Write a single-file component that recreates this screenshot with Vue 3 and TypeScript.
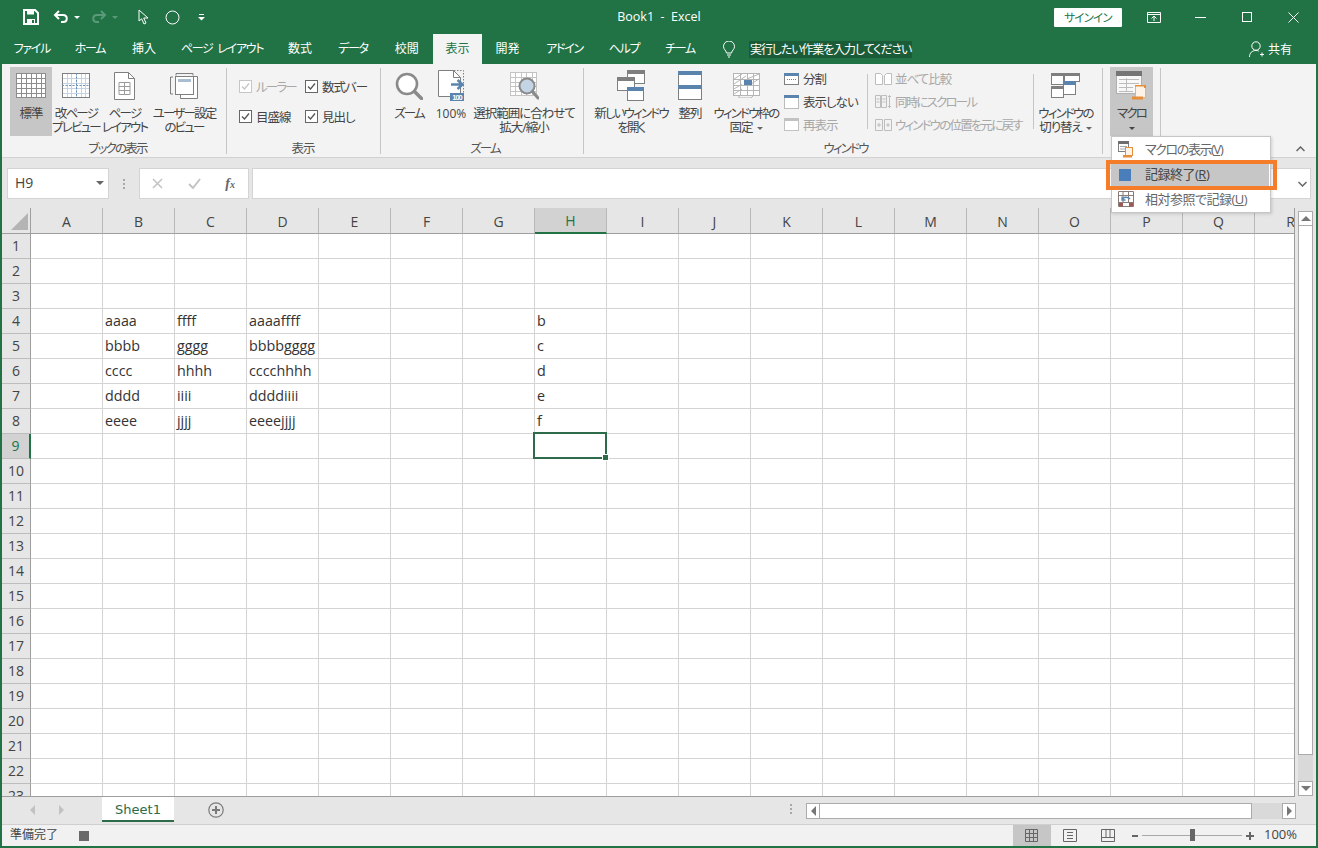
<script setup lang="ts">
type Btn = { icon: string; lines: string[]; w: number; on?: boolean; caret?: boolean }
type Icon = { w: number; h: number; svg: string }

const grey = '#7f7f7f'
const blue = '#5a84ae'

// the original UI font has narrow kana, so kana-heavy labels get tighter tracking
function tight(s: string) {
  return (s.match(/[ぁ-ヿ]/g)?.length ?? 0) / s.length > 0.5
}

function gridLines(x: number, y: number, w: number, h: number, cols: number, rows: number, color: string) {
  let s = `<rect x="${x + 0.5}" y="${y + 0.5}" width="${w - 1}" height="${h - 1}" fill="#fff" stroke="${color}"/>`
  for (let i = 1; i < cols; i++) {
    const px = x + Math.round((w * i) / cols) + 0.5
    s += `<path d="M${px} ${y}V${y + h}" stroke="${color}"/>`
  }
  for (let i = 1; i < rows; i++) {
    const py = y + Math.round((h * i) / rows) + 0.5
    s += `<path d="M${x} ${py}H${x + w}" stroke="${color}"/>`
  }
  return s
}

const icons: Record<string, Icon> = {
  normal: { w: 30, h: 25, svg: gridLines(0, 0, 30, 25, 6, 5, '#8c8c8c') },
  pagebreak: {
    w: 28,
    h: 25,
    svg:
      gridLines(0, 0, 28, 25, 6, 5, '#c5d3e2') +
      `<rect x=".5" y=".5" width="27" height="24" fill="none" stroke="${grey}"/><path d="M14.5 0v25M0 12.5h28" stroke="#6d8fb3" stroke-dasharray="2 1.5" fill="none"/>`,
  },
  pagelayout: {
    w: 21,
    h: 28,
    svg:
      `<path d="M.5.5h14l6 6v21H.5z" fill="#fff" stroke="${grey}"/><path d="M14.5.5v6h6" fill="none" stroke="${grey}"/>` +
      `<path d="M5 10.5h11M5 14.5h11M5 18.5h11M5 22.5h11M5 10.5v12M10.5 10.5v12M16 10.5v12" stroke="#9a9a9a" fill="none"/>`,
  },
  custom: {
    w: 28,
    h: 26,
    svg:
      `<path d="M10.5 3.5h17v22h-17z" fill="#fff" stroke="${grey}"/><rect x="5.500" y="3.500" width="18" height="18" fill="#fff" stroke="${grey}"/><rect x="8" y="6" width="13" height="3" fill="#a9bdd1"/>` +
      `<path d="M.5 4v17M3 4H.5M3 21H.5M6 .5h17M6 .5v2M23 .5v2" stroke="${grey}" fill="none"/>`,
  },
  zoom: {
    w: 28,
    h: 28,
    svg: `<circle cx="12" cy="12" r="10" fill="#fff" stroke="#8a8a8a" stroke-width="2.6"/><path d="M19.5 19.5l7 7" stroke="#8a8a8a" stroke-width="3.6" stroke-linecap="round"/>`,
  },
  hundred: {
    w: 27,
    h: 31,
    svg:
      `<path d="M.5.5h15l7 7v19H.5z" fill="#fff" stroke="${grey}"/><path d="M15.5.5v7h7" fill="none" stroke="${grey}"/><path d="M16 .5h9.500v22" fill="none" stroke="${grey}" stroke-dasharray="1.500 1.500"/>` +
      `<path d="M13 14.500h11M19.500 10l5 4.500-5 4.500" fill="none" stroke="${blue}" stroke-width="2.400"/>` +
      `<rect x="12" y="23" width="14" height="8" fill="${blue}"/><text x="19" y="30" text-anchor="middle" font-size="7.500" font-weight="700" fill="#fff" font-family="Liberation Sans, sans-serif">100</text>`,
  },
  fit: {
    w: 29,
    h: 28,
    svg:
      gridLines(0, 0, 27, 24, 5, 5, '#c4c4c4') +
      `<circle cx="17" cy="14" r="7.500" fill="#c3d4e5" stroke="#8a8a8a" stroke-width="2"/><path d="M22.500 19.500l5.500 6.500" stroke="#8a8a8a" stroke-width="3" stroke-linecap="round"/>`,
  },
  newwin: {
    w: 28,
    h: 31,
    svg:
      `<rect x="10.500" y=".5" width="17" height="13" fill="#fff" stroke="${grey}"/><rect x="10" y="0" width="18" height="4" fill="${grey}"/>` +
      `<rect x=".5" y="7.500" width="17" height="13" fill="#fff" stroke="${grey}"/><rect x="0" y="7" width="18" height="4" fill="${grey}"/>` +
      `<rect x="10.500" y="17.500" width="16" height="13" fill="#fff" stroke="${grey}"/><rect x="10" y="17" width="17" height="4" fill="${blue}"/>`,
  },
  arrange: {
    w: 24,
    h: 29,
    svg: `<rect x=".5" y=".5" width="23" height="28" fill="#fff" stroke="${grey}"/><rect x="0" y="0" width="24" height="4" fill="${blue}"/><rect x="0" y="14" width="24" height="4" fill="${blue}"/>`,
  },
  freeze: {
    w: 27,
    h: 25,
    svg:
      gridLines(0, 0, 27, 23, 4, 4, '#b5b5b5') +
      `<path d="M1 6l8-5M1 11l12-8M1 16l8-5M1 21l8-5M14 6l12-5M18 11l8-5" stroke="#b5b5b5" fill="none"/><rect x="11" y="7" width="8" height="5" fill="${blue}"/><path d="M6 23v2h12l2-2" fill="none" stroke="#b5b5b5"/>`,
  },
  switchwin: {
    w: 29,
    h: 25,
    svg:
      `<rect x=".5" y=".5" width="12" height="11" fill="#fff" stroke="${grey}"/><rect width="13" height="3" fill="${grey}"/>` +
      `<rect x=".5" y="13.500" width="12" height="11" fill="#fff" stroke="${grey}"/><rect y="13" width="13" height="3" fill="${grey}"/>` +
      `<rect x="13.500" y=".5" width="15" height="8" fill="#fff" stroke="${grey}"/><rect x="13" width="16" height="3" fill="${grey}"/>` +
      `<rect x="12.500" y="8.500" width="12" height="13" fill="#fff" stroke="${grey}"/><rect x="12" y="8" width="13" height="4" fill="${blue}"/>`,
  },
  macro: {
    w: 31,
    h: 29,
    svg:
      `<rect x=".5" y=".5" width="25" height="22" fill="#f8f8f8" stroke="#b0b0b0"/><rect width="26" height="5" fill="#757575"/><path d="M3 8.500h20M3 12.500h20M3 16.500h14M3 20.500h14M10.500 7v14" stroke="#bcbcbc" fill="none"/>` +
      `<rect x="19.500" y="14.500" width="10" height="12" fill="#fdf3e6" stroke="#e9b27c"/><path d="M19 14h11v3h-2v-1.500h-9z" fill="#e58e3c"/><path d="M16 25.500h11v3H16z" fill="#e58e3c"/>`,
  },
}

const bookBtns: Btn[] = [
  { icon: 'normal', lines: ['標準'], w: 42, on: true },
  { icon: 'pagebreak', lines: ['改ページ', 'プレビュー'], w: 48 },
  { icon: 'pagelayout', lines: ['ページ', 'レイアウト'], w: 49 },
  { icon: 'custom', lines: ['ユーザー設定', 'のビュー'], w: 70 },
]
const zoomBtns: Btn[] = [
  { icon: 'zoom', lines: ['ズーム'], w: 42 },
  { icon: 'hundred', lines: ['100%'], w: 42 },
  { icon: 'fit', lines: ['選択範囲に合わせて', '拡大/縮小'], w: 104 },
]
const windowBtns: Btn[] = [
  { icon: 'newwin', lines: ['新しいウィンドウ', 'を開く'], w: 82 },
  { icon: 'arrange', lines: ['整列'], w: 36 },
  { icon: 'freeze', lines: ['ウィンドウ枠の', '固定'], w: 76, caret: true },
]

const checks = [
  { label: 'ルーラー', off: true },
  { label: '数式バー' },
  { label: '目盛線' },
  { label: '見出し' },
]

const tabs = [
  { label: 'ファイル', w: 59.5 },
  { label: 'ホーム', w: 57 },
  { label: '挿入', w: 51 },
  { label: 'ページ レイアウト', w: 105 },
  { label: '数式', w: 51 },
  { label: 'データ', w: 55 },
  { label: '校閲', w: 52.5 },
  { label: '表示', w: 49 },
  { label: '開発', w: 51 },
  { label: 'アドイン', w: 63 },
  { label: 'ヘルプ', w: 56 },
  { label: 'チーム', w: 56 },
]
const columns = 'ABCDEFGHIJKLMNOPQR'.split('')
const rows = Array.from({ length: 23 }, (_, i) => i + 1)

const cells: Record<string, string> = {
  B4: 'aaaa', C4: 'ffff', D4: 'aaaaffff', H4: 'b',
  B5: 'bbbb', C5: 'gggg', D5: 'bbbbgggg', H5: 'c',
  B6: 'cccc', C6: 'hhhh', D6: 'cccchhhh', H6: 'd',
  B7: 'dddd', C7: 'iiii', D7: 'ddddiiii', H7: 'e',
  B8: 'eeee', C8: 'jjjj', D8: 'eeeejjjj', H8: 'f',
}
</script>

<template>
  <div class="window">
    <header class="titlebar">
      <div class="qat">
        <svg class="qat-save" width="16" height="16" viewBox="0 0 16 16"><path d="M1 1h11l3 3v11H1z" fill="none" stroke="#fff" stroke-width="2" /><path d="M4 1.500h7v4H4zM4 10h8v5H4z" fill="#fff" /><rect x="9" y="11" width="2" height="3" fill="#217346" /></svg>
        <svg class="qat-undo" width="16" height="14" viewBox="0 0 16 14"><path d="M6 1L2 5l4 4" fill="none" stroke="#fff" stroke-width="2" /><path d="M2 5h8c5 0 5 7 0 7H8" fill="none" stroke="#fff" stroke-width="2" /></svg>
        <i class="caret caret-white"></i>
        <svg class="qat-redo" width="16" height="14" viewBox="0 0 16 14"><path d="M10 1l4 4-4 4" fill="none" stroke="#5b9a78" stroke-width="2" /><path d="M14 5H6c-5 0-5 7 0 7h2" fill="none" stroke="#5b9a78" stroke-width="2" /></svg>
        <i class="caret caret-dim"></i>
        <svg class="qat-cursor" width="11" height="16" viewBox="0 0 11 16"><path d="M1 1v11l2.600-2.200L6 15l2-1-2.300-5H10z" fill="none" stroke="#fff" /></svg>
        <svg class="qat-circle" width="15" height="15" viewBox="0 0 15 15"><circle cx="7.500" cy="7.500" r="6.500" fill="none" stroke="#fff" /></svg>
        <svg class="qat-more" width="7" height="7" viewBox="0 0 7 7"><path d="M1 .5h5" stroke="#fff" /><path d="M0 3h7L3.500 6.500z" fill="#fff" /></svg>
      </div>
      <div class="doc-title">Book1 &nbsp;-&nbsp; Excel</div>
      <div class="win-controls">
        <span class="signin">サインイン</span>
        <svg class="ctl ctl-ribbon" width="14" height="11" viewBox="0 0 14 11"><path d="M.5.500h13v10H.5zM1 2.500h12M7 9V4.500M4.500 6.500L7 4l2.500 2.500" fill="none" stroke="#fff" /></svg>
        <svg class="ctl ctl-min" width="11" height="1" viewBox="0 0 11 1"><path d="M0 .5h11" stroke="#fff" /></svg>
        <svg class="ctl ctl-max" width="10" height="10" viewBox="0 0 10 10"><rect x=".5" y=".5" width="9" height="9" fill="none" stroke="#fff" /></svg>
        <svg class="ctl ctl-close" width="11" height="11" viewBox="0 0 11 11"><path d="M.5.500l10 10M10.500.500l-10 10" stroke="#fff" /></svg>
      </div>
    </header>

    <nav class="tabbar">
      <span v-for="t in tabs" :key="t.label" class="tab" :class="{ 'tab-on': t.label === '表示', 'tab-kana': tight(t.label) }" :style="{ width: t.w + 'px' }">{{ t.label }}</span>
      <svg class="bulb" width="12" height="17" viewBox="0 0 12 17"><path d="M3.500 12C3 9 .5 8.500.5 5.500a5.500 5.500 0 0 1 11 0C11.500 8.500 9 9 8.500 12zM4 14h4M5 16h2" fill="none" stroke="#fff" /></svg>
      <span class="tell-me">実行したい作業を入力してください</span>
      <span class="share">
        <svg width="15" height="17" viewBox="0 0 15 17"><circle cx="7" cy="5" r="4.200" fill="none" stroke="#fff" /><path d="M.5 16c0-4 2.500-6.500 6.500-6.500 1 0 2 .2 2.800.6M11 13.500h4M13 11.500v4" fill="none" stroke="#fff" /></svg>
        共有
      </span>
    </nav>

    <section class="ribbon">
      <div class="group g-book">
        <div class="btn-row">
          <div v-for="b in bookBtns" :key="b.icon" class="big-btn" :class="{ 'big-on': b.on }" :style="{ width: b.w + 'px' }">
            <div class="big-icon"><svg :width="icons[b.icon].w" :height="icons[b.icon].h" v-html="icons[b.icon].svg"></svg></div>
            <div v-for="l in b.lines" :key="l" class="big-line" :class="{ kana: tight(l) }">{{ l }}</div>
          </div>
        </div>
        <div class="group-label kana">ブックの表示</div>
      </div>

      <div class="group g-show">
        <div class="checks">
          <label v-for="c in checks" :key="c.label" class="check" :class="{ dim: c.off, kana: tight(c.label) }">
            <svg width="13" height="13" viewBox="0 0 13 13"><rect x=".5" y=".5" width="12" height="12" fill="#fff" :stroke="c.off ? '#c6c6c6' : '#666'" /><path d="M3 6.500l2.500 2.500L10 3.500" fill="none" :stroke="c.off ? '#c6c6c6' : '#555'" stroke-width="1.300" /></svg>
            {{ c.label }}
          </label>
        </div>
        <div class="group-label">表示</div>
      </div>

      <div class="group g-zoom">
        <div class="btn-row">
          <div v-for="b in zoomBtns" :key="b.icon" class="big-btn" :style="{ width: b.w + 'px' }">
            <div class="big-icon"><svg :width="icons[b.icon].w" :height="icons[b.icon].h" v-html="icons[b.icon].svg"></svg></div>
            <div v-for="l in b.lines" :key="l" class="big-line" :class="{ latin: l === '100%', kana: tight(l) }">{{ l }}</div>
          </div>
        </div>
        <div class="group-label kana">ズーム</div>
      </div>

      <div class="group g-window">
        <div class="btn-row">
          <div v-for="b in windowBtns" :key="b.icon" class="big-btn" :style="{ width: b.w + 'px' }">
            <div class="big-icon"><svg :width="icons[b.icon].w" :height="icons[b.icon].h" v-html="icons[b.icon].svg"></svg></div>
            <div v-for="l in b.lines" :key="l" class="big-line" :class="{ kana: tight(l) }">{{ l }}<i v-if="b.caret && l === '固定'" class="caret caret-grey"></i></div>
          </div>

          <div class="small-col">
            <div class="small-item">
              <svg width="15" height="12" viewBox="0 0 15 12"><rect x=".5" y=".5" width="14" height="11" fill="#fff" stroke="#7f7f7f" /><rect width="15" height="3" fill="#5a84ae" /><path d="M3 6.500h9" stroke="#7f7f7f" stroke-dasharray="1 1" /></svg>
              分割
            </div>
            <div class="small-item">
              <svg width="15" height="14" viewBox="0 0 15 14"><rect x=".5" y=".5" width="14" height="13" fill="#fff" stroke="#7f7f7f" stroke-dasharray="1 1" /><rect width="15" height="3" fill="#5a84ae" /></svg>
              表示しない
            </div>
            <div class="small-item dim">
              <svg width="15" height="13" viewBox="0 0 15 13"><rect x=".5" y=".5" width="14" height="12" fill="#fff" stroke="#c2c2c2" /><rect width="15" height="3" fill="#c2c2c2" /></svg>
              再表示
            </div>
          </div>

          <i class="vsep"></i>

          <div class="compare-col">
            <div class="small-item dim">
              <svg width="17" height="12" viewBox="0 0 17 12"><path d="M.5.500h5l2 2v9h-7zM9.500 2.500l2-2h5v11h-7z" fill="#fff" stroke="#bdbdbd" /></svg>
              並べて比較
            </div>
            <div class="small-item dim kana">
              <svg width="17" height="13" viewBox="0 0 17 13"><path d="M.5.500h5v12h-5zM6.500.500h5v12h-5zM1.500 4h3M1.500 7h3M7.500 4h3M7.500 7h3M14.500 0v13M13 2l1.500-1.500L16 2M13 11l1.500 1.500L16 11" fill="none" stroke="#bdbdbd" /></svg>
              同時にスクロール
            </div>
            <div class="small-item dim kana">
              <svg width="17" height="12" viewBox="0 0 17 12"><path d="M.5.500h7v11h-7zM9.500.500h7v11h-7zM2 6h4M4 4v4M11 6h4M13 4v4" fill="none" stroke="#bdbdbd" /></svg>
              ウィンドウの位置を元に戻す
            </div>
          </div>

          <i class="vsep"></i>

          <div class="big-btn switch-btn">
            <div class="big-icon"><svg :width="icons.switchwin.w" :height="icons.switchwin.h" v-html="icons.switchwin.svg"></svg></div>
            <div class="big-line kana">ウィンドウの</div>
            <div class="big-line">切り替え<i class="caret caret-grey"></i></div>
          </div>
        </div>
        <div class="group-label kana">ウィンドウ</div>
      </div>

      <div class="group g-macro">
        <div class="btn-row">
          <div class="big-btn big-on macro-btn">
            <div class="big-icon"><svg :width="icons.macro.w" :height="icons.macro.h" v-html="icons.macro.svg"></svg></div>
            <div class="big-line kana">マクロ</div>
            <div class="big-line"><i class="caret caret-dark"></i></div>
          </div>
        </div>
      </div>

      <svg class="collapse" width="9" height="6" viewBox="0 0 9 6"><path d="M.5 5l4-4 4 4" fill="none" stroke="#666" stroke-width="1.500" /></svg>
    </section>

    <section class="formula">
      <div class="namebox">H9<i class="caret caret-grey namebox-caret"></i></div>
      <div class="grip"><b></b><b></b><b></b></div>
      <div class="fx-box">
        <svg width="11" height="11" viewBox="0 0 11 11"><path d="M1 1l9 9M10 1l-9 9" stroke="#c4c4c4" stroke-width="1.600" /></svg>
        <svg width="13" height="11" viewBox="0 0 13 11"><path d="M1 6l4 4 7-9" fill="none" stroke="#c4c4c4" stroke-width="2" /></svg>
        <span class="fx">f<small>x</small></span>
      </div>
      <div class="formula-input">
        <svg width="9" height="6" viewBox="0 0 9 6"><path d="M.5 1l4 4 4-4" fill="none" stroke="#666" stroke-width="1.500" /></svg>
      </div>
    </section>

    <section class="sheet-area">
      <div class="grid">
        <div class="corner"><i></i></div>
        <div v-for="c in columns" :key="c" class="col-head" :class="{ 'head-on': c === 'H' }">{{ c }}</div>
        <template v-for="r in rows" :key="r">
          <div class="row-head" :class="{ 'row-on': r === 9 }">{{ r }}</div>
          <div v-for="c in columns" :key="c" class="cell" :class="{ selected: c + r === 'H9' }">{{ cells[c + r] }}</div>
        </template>
      </div>
      <div class="vscroll">
        <div class="sb-btn"><i class="tri tri-up"></i></div>
        <div class="v-thumb"></div>
        <div class="sb-btn sb-end"><i class="tri tri-down"></i></div>
      </div>
    </section>

    <section class="sheet-tabs">
      <i class="tri tri-left nav-a"></i>
      <i class="tri tri-right nav-b"></i>
      <div class="sheet-tab">Sheet1</div>
      <svg class="add-sheet" width="16" height="16" viewBox="0 0 16 16"><circle cx="8" cy="8" r="7.200" fill="none" stroke="#7a7a7a" stroke-width="1.200" /><path d="M8 4v8M4 8h8" stroke="#7a7a7a" stroke-width="2" /></svg>
      <div class="grip grip-tabs"><b></b><b></b><b></b></div>
      <div class="hscroll">
        <div class="sb-btn sb-h"><i class="tri tri-left"></i></div>
        <div class="h-thumb"></div>
        <div class="sb-btn sb-h sb-h-end"><i class="tri tri-right"></i></div>
      </div>
    </section>

    <footer class="statusbar">
      <span class="ready">準備完了</span>
      <i class="rec-stop"></i>
      <div class="view-btn view-on">
        <svg width="13" height="13" viewBox="0 0 13 13"><path d="M.5.500h12v12H.5zM.5 4.500h12M.5 8.500h12M4.500.500v12M8.500.500v12" fill="none" stroke="#666" /></svg>
      </div>
      <div class="view-btn">
        <svg width="14" height="13" viewBox="0 0 14 13"><path d="M.5.500h13v12H.5zM4 3.500h6M4 6.500h6M4 9.500h6" fill="none" stroke="#666" /></svg>
      </div>
      <div class="view-btn">
        <svg width="14" height="13" viewBox="0 0 14 13"><path d="M.5.500h13v12H.5zM.5 8.500h13M5 .500v8M9 .500v8" fill="none" stroke="#666" /></svg>
      </div>
      <div class="zoom-slider">
        <i class="zs-minus"></i>
        <div class="zs-track"><i class="zs-thumb"></i></div>
        <i class="zs-plus"></i>
      </div>
      <span class="zoom-pct">100%</span>
    </footer>

    <div class="macro-menu">
      <div class="menu-item item-kana">
        <svg width="17" height="17" viewBox="0 0 17 17"><rect x=".5" y=".5" width="10" height="10" fill="#fff" stroke="#7f7f7f" /><rect width="11" height="3" fill="#6e6e6e" /><path d="M2 5.500h7M2 8h7" stroke="#a8a8a8" /><rect x="7.500" y="6.500" width="7" height="8" fill="#fdf3e6" stroke="#e58e3c" /><path d="M5 14h9v2.500H5z" fill="#e58e3c" /></svg>
        <span>マクロの表示(<u>V</u>)</span>
      </div>
      <div class="menu-item menu-on">
        <i class="stop-square"></i>
        <span>記録終了(<u>R</u>)</span>
      </div>
      <div class="menu-item">
        <svg width="17" height="17" viewBox="0 0 17 17"><path d="M.5.500h15v15H.5zM.5 4.500h15M5 .500v4M10.500.500v4M5 4.500v7M10.500 4.500v7M.5 11.500h15" fill="#fff" stroke="#8a7a7a" /><path d="M1 12h4v3.500H1zM11 12h4v3.500h-4z" fill="#9c5a55" /><path d="M4 9c1-3.500 6-3.500 8-1M4 5.500V9h3.500" fill="none" stroke="#5a84ae" stroke-width="1.300" /></svg>
        <span>相対参照で記録(<u>U</u>)</span>
      </div>
    </div>
    <div class="callout"></div>
  </div>
</template>

<style>
html,
body {
  margin: 0;
  background: #fff;
}
</style>

<style scoped>
.window {
  background: #e6e6e6;
  border: solid #217346;
  border-width: 0 2px 2px;
  box-sizing: border-box;
  color: #444;
  display: flex;
  flex-direction: column;
  font-family: "Open Sans", "Noto Sans CJK JP", sans-serif;
  font-feature-settings: "palt";
  font-size: 12px;
  height: 848px;
  overflow: hidden;
  position: relative;
  width: 1318px;
}

i {
  display: block;
}

/* title bar */
.titlebar {
  align-items: center;
  background: #217346;
  color: #fff;
  display: grid;
  flex: none;
  grid-template-columns: 1fr auto 1fr;
  height: 34px;
}

.qat {
  align-items: center;
  display: flex;
  padding-left: 21px;
}

.qat-undo {
  margin-left: 14px;
}

.qat-redo {
  margin-left: 11px;
}

.qat-cursor {
  margin-left: 20px;
}

.qat-circle {
  margin-left: 16px;
}

.qat-more {
  margin-left: 18px;
}

.caret {
  border-left: 3px solid transparent;
  border-right: 3px solid transparent;
  border-top: 3px solid #fff;
  display: inline-block;
  height: 0;
  vertical-align: middle;
  width: 0;
}

.caret-white {
  margin-left: 5px;
}

.caret-dim {
  border-top-color: #5b9a78;
  margin-left: 5px;
}

.caret-grey {
  border-top-color: #666;
  margin-left: 4px;
}

.caret-dark {
  border-top-color: #444;
}

.doc-title {
  font-size: 12.500px;
  padding-bottom: 2px;
}

.win-controls {
  align-items: center;
  display: flex;
  justify-content: flex-end;
}

.signin {
  background: #fff;
  border-radius: 1px;
  color: #217346;
  font-size: 11.500px;
  letter-spacing: -0.8px;
  line-height: 19px;
  text-align: center;
  width: 68px;
}

.ctl-ribbon {
  margin-left: 25px;
}

.ctl-min {
  margin-left: 34px;
}

.ctl-max {
  margin-left: 36px;
}

.ctl-close {
  margin-left: 36px;
  margin-right: 17px;
}

/* tabs */
.tabbar {
  align-items: center;
  background: #217346;
  color: #fff;
  display: flex;
  flex: none;
  height: 30px;
}

.tab {
  flex: none;
  line-height: 30px;
  text-align: center;
  white-space: pre;
}

.tab-kana {
  letter-spacing: -1.300px;
  word-spacing: 3px;
}

.tab-on {
  background: #f3f3f3;
  color: #217346;
}

.bulb {
  margin-left: 15px;
}

.tell-me {
  background: #1a5c38;
  letter-spacing: -1.100px;
  line-height: 17px;
  margin-left: 14px;
  padding: 0 1px;
}

.share {
  align-items: center;
  display: flex;
  gap: 4px;
  margin-left: auto;
  margin-right: 24px;
}

/* ribbon */
.ribbon {
  background: #f3f3f3;
  border-bottom: 1px solid #d2d2d2;
  box-sizing: border-box;
  display: flex;
  flex: none;
  font-size: 12.500px;
  height: 94px;
  letter-spacing: -1px;
  padding-top: 3px;
  position: relative;
}

.group {
  box-sizing: border-box;
  display: flex;
  flex: none;
  flex-direction: column;
  height: 90px;
  position: relative;
}

.group::after {
  background: #c6c6c6;
  bottom: 3px;
  content: "";
  position: absolute;
  right: 0;
  top: 1px;
  width: 1px;
}

.g-book {
  padding-left: 8px;
  width: 225px;
}

.g-show {
  width: 154px;
}

.g-zoom {
  padding-left: 7px;
  width: 203px;
}

.g-window {
  padding-left: 6px;
  width: 519px;
}

.g-macro {
  padding-left: 7px;
  width: 58px;
}

.btn-row {
  display: flex;
  height: 69px;
}

.group-label {
  color: #555;
  line-height: 15px;
  margin-top: 5px;
  padding-right: 2px;
  text-align: center;
}

.big-btn {
  box-sizing: border-box;
  flex: none;
  height: 69px;
  padding-top: 3px;
  text-align: center;
}

.big-on {
  background: #c6c6c6;
}

.big-icon {
  align-items: center;
  display: flex;
  height: 31px;
  justify-content: center;
  margin-bottom: 6px;
}

.big-line {
  line-height: 14px;
  white-space: nowrap;
}

.kana {
  letter-spacing: -1.800px;
}

.latin {
  font-size: 12px;
  letter-spacing: 0;
}

.checks {
  box-sizing: border-box;
  display: grid;
  grid-template-columns: 66px auto;
  grid-template-rows: 30px 30px;
  height: 69px;
  padding: 4px 0 0 12px;
}

.check {
  align-items: center;
  display: flex;
  gap: 4px;
}

.dim {
  color: #a8a8a8;
}

.small-col {
  display: flex;
  flex: none;
  flex-direction: column;
  width: 83px;
}

.vsep {
  background: #c6c6c6;
  flex: none;
  height: 55px;
  margin-top: 7px;
  width: 1px;
}

.compare-col {
  box-sizing: border-box;
  display: flex;
  flex: none;
  flex-direction: column;
  padding-left: 7px;
  width: 165px;
}

.compare-col .small-item {
  gap: 3px;
}

.small-item {
  align-items: center;
  display: flex;
  flex: none;
  gap: 4px;
  height: 23px;
  white-space: nowrap;
}

.small-item svg {
  flex: none;
}

.switch-btn {
  width: 63px;
}

.macro-btn {
  width: 43px;
}

.collapse {
  bottom: 5px;
  position: absolute;
  right: 11px;
}

/* formula bar */
.formula {
  align-items: flex-start;
  box-sizing: border-box;
  display: flex;
  flex: none;
  height: 50px;
  padding-top: 10px;
}

.namebox {
  align-items: center;
  background: #fff;
  border: 1px solid #d4d4d4;
  box-sizing: border-box;
  display: flex;
  font-size: 14px;
  height: 31px;
  justify-content: space-between;
  margin-left: 5px;
  padding: 0 4px 2px 7px;
  width: 102px;
}

.namebox-caret {
  border-left-width: 4px;
  border-right-width: 4px;
  border-top-width: 4px;
}

.grip {
  display: flex;
  flex: none;
  flex-direction: column;
  gap: 2px;
  height: 31px;
  justify-content: center;
  margin-left: 14px;
  width: 16px;
}

.grip b {
  background: #a8a8a8;
  display: block;
  height: 2px;
  width: 2px;
}

.fx-box {
  align-items: center;
  background: #fff;
  border: 1px solid #d4d4d4;
  box-sizing: border-box;
  display: flex;
  height: 31px;
  justify-content: space-between;
  padding: 0 13px 0 12px;
  width: 110px;
}

.fx {
  color: #666;
  font-family: "Liberation Serif", serif;
  font-size: 14px;
  font-style: italic;
  font-weight: 700;
}

.fx small {
  font-size: 10px;
}

.formula-input {
  align-items: center;
  background: #fff;
  border: 1px solid #d4d4d4;
  box-sizing: border-box;
  display: flex;
  height: 31px;
  justify-content: flex-end;
  margin-left: 3px;
  padding-right: 3px;
  width: 1059px;
}

/* sheet */
.sheet-area {
  display: flex;
  flex: none;
  height: 589px;
}

.grid {
  background: #fff;
  border-bottom: 1px solid #9e9e9e;
  border-right: 1px solid #9e9e9e;
  box-sizing: border-box;
  display: grid;
  flex: none;
  grid-auto-rows: 25px;
  grid-template-columns: 29px repeat(18, 72px);
  grid-template-rows: 26px;
  overflow: hidden;
  width: 1293px;
}

.corner {
  background: #e6e6e6;
  border-bottom: 1px solid #9e9e9e;
  border-right: 1px solid #9e9e9e;
  box-sizing: border-box;
  padding: 5px 0 0 9px;
}

.corner i {
  border-bottom: 17px solid #b4b4b4;
  border-left: 17px solid transparent;
  height: 0;
  width: 0;
}

.col-head {
  align-items: center;
  background: #e6e6e6;
  border-bottom: 1px solid #9e9e9e;
  border-right: 1px solid #b8b8b8;
  box-sizing: border-box;
  display: flex;
  font-size: 14px;
  justify-content: center;
  padding-top: 1px;
}

.head-on {
  background: #d2d2d2;
  border-bottom: 2px solid #217346;
  color: #217346;
}

.row-head {
  align-items: center;
  background: #e6e6e6;
  border-bottom: 1px solid #bcbcbc;
  border-right: 1px solid #9e9e9e;
  box-sizing: border-box;
  display: flex;
  font-size: 14px;
  justify-content: center;
  padding-bottom: 1px;
}

.row-on {
  background: #d2d2d2;
  border-right: 2px solid #217346;
  color: #217346;
}

.cell {
  align-items: center;
  border-bottom: 1px solid #d4d4d4;
  border-right: 1px solid #d4d4d4;
  box-sizing: border-box;
  color: #333;
  display: flex;
  font-size: 14.300px;
  padding: 0 0 1px 2px;
  white-space: nowrap;
}

.selected {
  position: relative;
}

.selected::before {
  border: 2px solid #2d6b4a;
  bottom: -1px;
  content: "";
  left: -2px;
  position: absolute;
  right: -1px;
  top: -2px;
}

.selected::after {
  background: #2d6b4a;
  border: 1px solid #fff;
  bottom: -3px;
  box-sizing: border-box;
  content: "";
  height: 7px;
  position: absolute;
  right: -3px;
  width: 7px;
}

.vscroll {
  background: #d9d9d9;
  border-top: 3px solid #e6e6e6;
  box-sizing: border-box;
  display: flex;
  flex: none;
  flex-direction: column;
  height: 588px;
  margin-left: 3px;
  width: 15px;
}

.sb-btn {
  align-items: center;
  background: #fff;
  border: 1px solid #ababab;
  box-sizing: border-box;
  display: flex;
  flex: none;
  height: 15px;
  justify-content: center;
  width: 15px;
}

.sb-end {
  margin-top: auto;
}

.v-thumb {
  background: #fff;
  border: 1px solid #ababab;
  border-top: 0;
  box-sizing: border-box;
  height: 529px;
}

.tri {
  height: 0;
  width: 0;
}

.tri-up {
  border-bottom: 5px solid #777;
  border-left: 5px solid transparent;
  border-right: 5px solid transparent;
}

.tri-down {
  border-left: 5px solid transparent;
  border-right: 5px solid transparent;
  border-top: 5px solid #777;
}

.tri-left {
  border-bottom: 5px solid transparent;
  border-right: 5px solid #777;
  border-top: 5px solid transparent;
}

.tri-right {
  border-bottom: 5px solid transparent;
  border-left: 5px solid #777;
  border-top: 5px solid transparent;
}

/* sheet tabs */
.sheet-tabs {
  align-items: flex-start;
  border-bottom: 1px solid #cfcfcf;
  box-sizing: border-box;
  display: flex;
  flex: none;
  height: 28px;
}

.nav-a,
.nav-b {
  margin-top: 8px;
}

.nav-a {
  border-right-color: #c2c2c2;
  margin-left: 28px;
}

.nav-b {
  border-left-color: #c2c2c2;
  margin-left: 24px;
}

.sheet-tab {
  background: #fff;
  border-bottom: 2px solid #2d6b4a;
  box-sizing: border-box;
  color: #2d6b4a;
  font-family: "DejaVu Sans", sans-serif;
  font-size: 13px;
  height: 25px;
  line-height: 25px;
  margin-left: 38px;
  text-align: center;
  width: 72px;
}

.add-sheet {
  margin-left: 34px;
  margin-top: 5px;
}

.grip-tabs {
  height: 23px;
  margin-left: 566px;
  width: 16px;
}

.hscroll {
  background: #d9d9d9;
  display: flex;
  flex: none;
  height: 16px;
  margin-top: 6px;
  width: 490px;
}

.sb-h {
  height: 16px;
  width: 14px;
}

.sb-h-end {
  margin-left: auto;
}

.h-thumb {
  background: #fff;
  border: 1px solid #ababab;
  border-left: 0;
  box-sizing: border-box;
  width: 432px;
}

/* status bar */
.statusbar {
  align-items: center;
  background: #f1f1f1;
  display: flex;
  flex: 1;
  min-height: 0;
}

.ready {
  margin-bottom: 3px;
  margin-left: 8px;
}

.rec-stop {
  background: #696969;
  flex: none;
  height: 10px;
  margin-left: 21px;
  width: 10px;
}

.view-btn {
  align-items: center;
  align-self: stretch;
  display: flex;
  flex: none;
  justify-content: center;
  width: 38px;
}

.view-on {
  background: #c6c6c6;
  margin-left: auto;
}

.zoom-slider {
  align-items: center;
  display: flex;
  flex: none;
  margin-left: 5px;
}

.zs-minus {
  background: #666;
  height: 2px;
  width: 6px;
}

.zs-track {
  background: #a8a8a8;
  height: 1px;
  margin: 0 4px;
  position: relative;
  width: 100px;
}

.zs-thumb {
  background: #666;
  height: 12px;
  left: 48px;
  position: absolute;
  top: -6px;
  width: 5px;
}

.zs-plus {
  background: linear-gradient(#666, #666) center / 8px 2px no-repeat, linear-gradient(#666, #666) center / 2px 8px no-repeat;
  height: 8px;
  width: 8px;
}

.zoom-pct {
  flex: none;
  font-size: 13px;
  margin-bottom: 3px;
  margin-left: 10px;
  margin-right: 19px;
}

/* macro dropdown + callout */
.macro-menu {
  background: #fff;
  border: 1px solid #c6c6c6;
  box-shadow: 1px 1px 3px rgba(0, 0, 0, 0.15);
  box-sizing: border-box;
  color: #666;
  font-size: 13px;
  left: 1109px;
  letter-spacing: -0.500px;
  position: absolute;
  top: 136px;
  width: 160px;
}

.menu-item {
  align-items: center;
  display: flex;
  height: 25px;
  padding-left: 6px;
}

.item-kana {
  letter-spacing: -1.400px;
}

.menu-item span {
  margin-left: 10px;
  padding-bottom: 2px;
}

.menu-on {
  background: #c6c6c6;
  border-right: 1px solid #fff;
  color: #444;
}

.stop-square {
  background: #4a7ebb;
  height: 12px;
  margin-left: 1px;
  margin-right: 14px;
  width: 12px;
}

.menu-on span {
  margin-left: 0;
}

.callout {
  border: 4px solid #f57c28;
  box-sizing: border-box;
  height: 30px;
  left: 1104px;
  position: absolute;
  top: 160px;
  width: 171px;
}
</style>
